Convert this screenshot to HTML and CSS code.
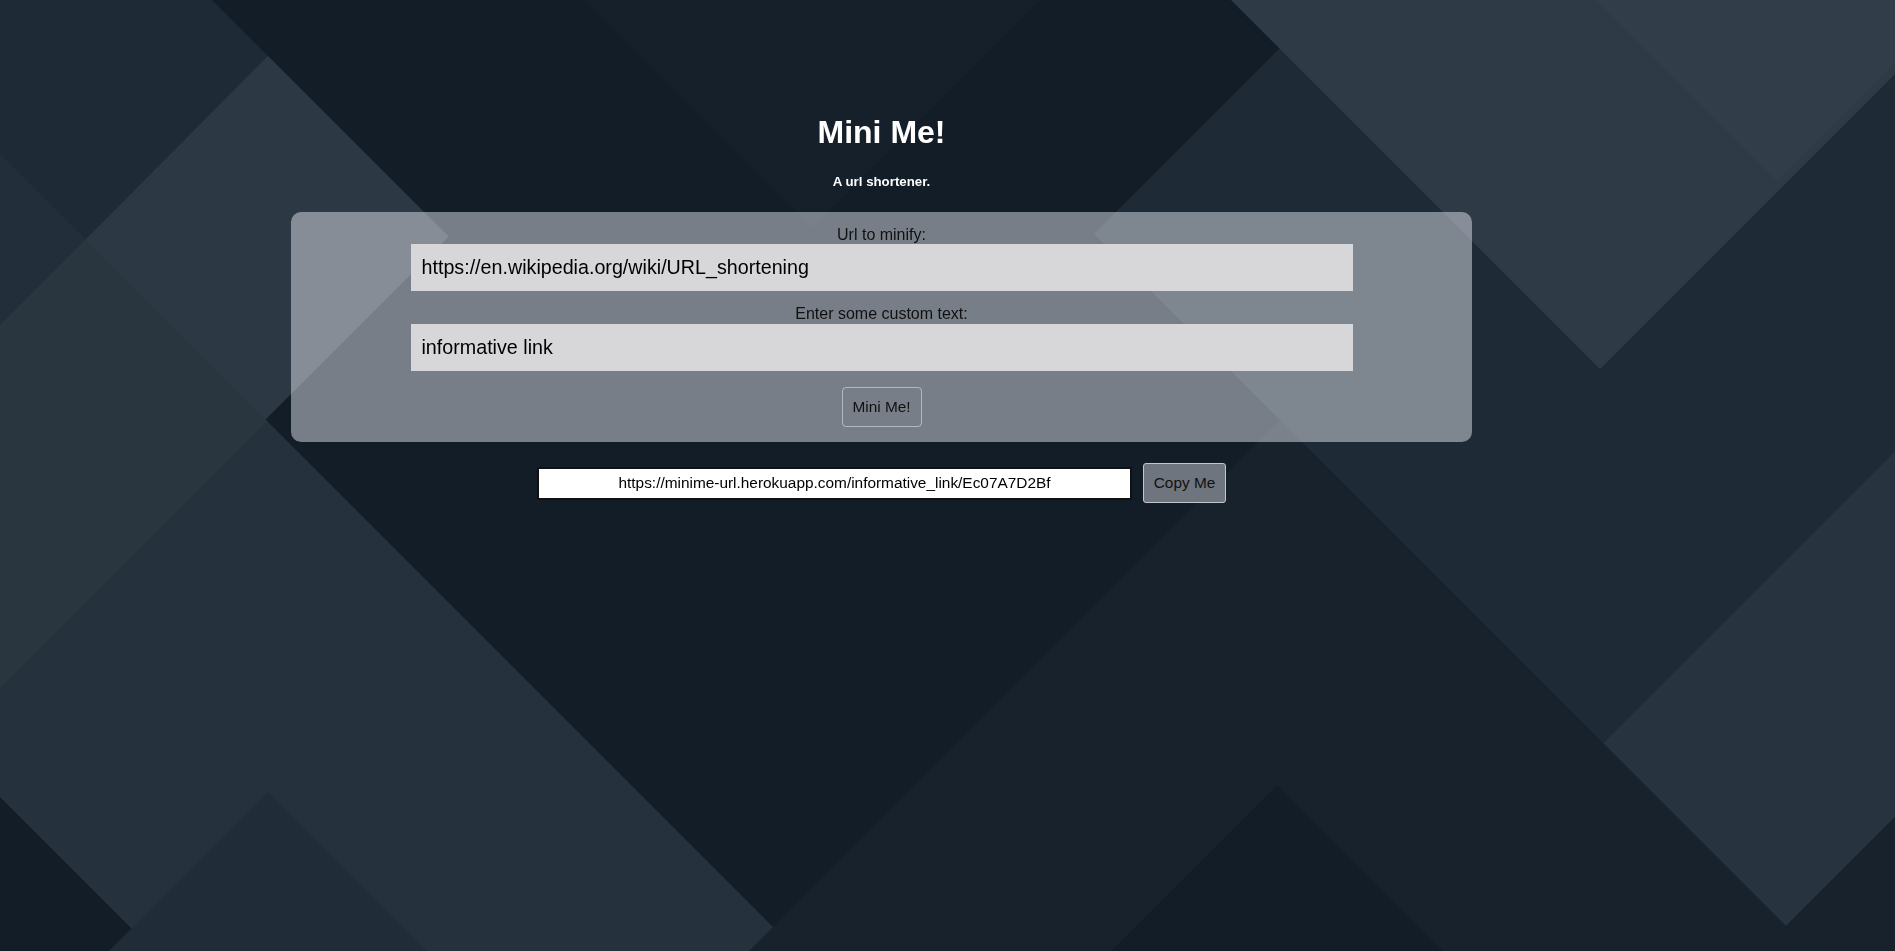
FILE: index.html
```html
<!DOCTYPE html>
<html lang="en">
<head>
<meta charset="utf-8">
<title>Mini Me!</title>
<link rel="stylesheet" href="styles.css">
</head>
<body>
<svg class="bg" viewBox="0 0 1895 951" preserveAspectRatio="none" aria-hidden="true">
  <polygon class="s-faint" points="585,0 1040,0 812.5,227.5"/>
  <polygon class="s-mid" points="0,0 212,0 448.5,236.5 0,685"/>
  <polygon class="s-band" points="0,154 797,951 154,951 0,797"/>
  <polygon class="s-band2" points="0,325 85.5,239.5 267,421 0,688"/>
  <polygon class="s-corner" points="0,154 85.5,239.5 0,325"/>
  <polygon class="s-light" points="268,56 448.5,236.5 265.5,419.5 85.5,239.5"/>
  <polygon class="s-dip" points="268,792 109,951 427,951"/>
  <polygon class="s-p" points="1280,420 749,951 1811,951"/>
  <polygon class="s-base" points="1277,785 1111,951 1443,951"/>
  <polygon class="s-mid" points="1094,234 1328,0 1895,0 1895,451 1603,743"/>
  <polygon class="s-r" points="1603,743 1895,451 1895,817 1786,926"/>
  <polygon class="s-p" points="1786,926 1895,817 1895,951 1811,951"/>
  <polygon class="s-v" points="1231,0 1600,369 1895,74 1895,0"/>
  <polygon class="s-v2" points="1596,0 1777,181 1895,63 1895,0"/>
</svg>
<main class="wrap">
  <h1 class="title">Mini Me!</h1>
  <h5 class="tagline">A url shortener.</h5>
  <form class="panel">
    <label class="field-label" for="url">Url to minify:</label>
    <input class="field" id="url" type="text" value="https://en.wikipedia.org/wiki/URL_shortening">
    <label class="field-label second" for="custom">Enter some custom text:</label>
    <input class="field" id="custom" type="text" value="informative link">
    <button class="btn-submit" type="button">Mini Me!</button>
  </form>
  <div class="result">
    <input class="result-field" type="text" readonly value="https://minime-url.herokuapp.com/informative_link/Ec07A7D2Bf">
    <button class="btn-copy" type="button">Copy Me</button>
  </div>
</main>
</body>
</html>
```
FILE: styles.css
```css
html, body {
  margin: 0;
  height: 100%;
}
body {
  background: #131d27;
  font-family: "Liberation Sans", Arial, sans-serif;
  overflow: hidden;
  position: relative;
}
.bg {
  position: fixed;
  top: 0;
  left: 0;
  width: 100%;
  height: 100%;
  z-index: 0;
  display: block;
}
.s-faint { fill: #16202a; }
.s-mid { fill: #1e2a35; }
.s-band { fill: #25313c; }
.s-band2 { fill: #29353f; }
.s-corner { fill: #222e39; }
.s-light { fill: #2c3843; }
.s-dip { fill: #202c37; }
.s-p { fill: #17222d; }
.s-base { fill: #131d27; }
.s-r { fill: #27333e; }
.s-v { fill: #2e3a45; }
.s-v2 { fill: #313d48; }

.wrap {
  position: relative;
  z-index: 1;
  width: 1181px;
  margin-left: 291px;
  padding-top: 114px;
  text-align: center;
}
.title {
  margin: 0;
  font-size: 32px;
  line-height: 37px;
  font-weight: bold;
  color: #fff;
}
.tagline {
  margin: 22.8px 0 0;
  font-size: 13.28px;
  line-height: 15px;
  font-weight: bold;
  color: #fff;
}
.panel {
  margin: 23.7px 0 0;
  background: rgba(243, 247, 255, 0.45);
  border-radius: 10px;
  padding: 12.5px 0 15px;
  display: flex;
  flex-direction: column;
  align-items: center;
}
.field-label {
  font-size: 16px;
  line-height: 19px;
  color: #111;
}
.field-label.second {
  margin-top: 14px;
  line-height: 18.5px;
}
.field {
  width: 942px;
  height: 47.5px;
  box-sizing: border-box;
  border: 0;
  margin: 0;
  background: #d7d7d9;
  padding: 0 11px;
  font-family: "Liberation Sans", Arial, sans-serif;
  font-size: 19.7px;
  color: #000;
  outline: none;
}
.btn-submit {
  margin-top: 16px;
  width: 80px;
  height: 40px;
  box-sizing: border-box;
  background: transparent;
  border: 1px solid rgba(255, 255, 255, 0.45);
  border-radius: 4px;
  font-family: "Liberation Sans", Arial, sans-serif;
  font-size: 15.4px;
  color: #111;
  padding: 0;
}
.result {
  margin-top: 20.8px;
  display: flex;
  justify-content: center;
  align-items: center;
  gap: 11px;
}
.result-field {
  width: 595px;
  height: 33.3px;
  box-sizing: border-box;
  border: 2px solid #111;
  margin: 0;
  background: #fff;
  text-align: center;
  font-family: "Liberation Sans", Arial, sans-serif;
  font-size: 15.4px;
  color: #000;
  padding: 0;
  outline: none;
}
.btn-copy {
  width: 83px;
  height: 40px;
  box-sizing: border-box;
  background: #6e757e;
  border: 1px solid #c3c7cc;
  border-radius: 3px;
  font-family: "Liberation Sans", Arial, sans-serif;
  font-size: 15.4px;
  color: #111;
  padding: 0;
}
```
